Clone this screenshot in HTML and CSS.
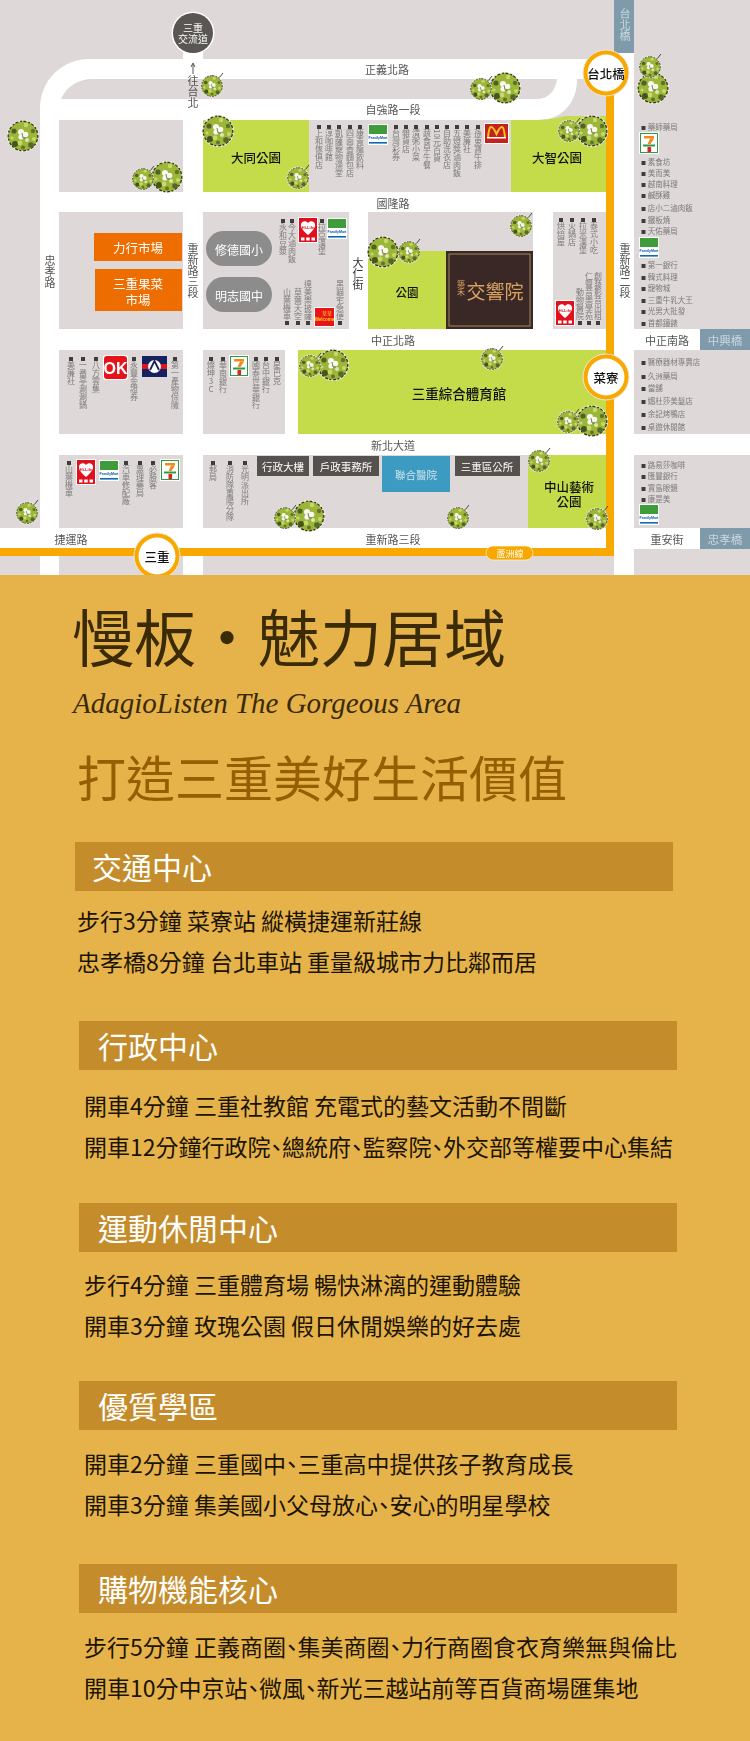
FILE: index.html
```html
<!DOCTYPE html>
<html lang="zh-Hant">
<head>
<meta charset="utf-8">
<title>慢板·魅力居域</title>
<link rel="stylesheet" href="styles.css">
</head>
<body>
<div class="page">
<svg class="map" viewBox="0 0 750 575" width="750" height="575" xmlns="http://www.w3.org/2000/svg">
  <defs>
    <g id="tree">
      <circle r="16" fill="#f4f2ee"/>
      <circle r="14.800" fill="#9cb63a"/>
      <circle r="14.800" fill="none" stroke="#2f3316" stroke-width="1.300" stroke-dasharray="2 1.300 3 2"/>
      <circle cx="-9" cy="-5" r="2.600" fill="#4f6126"/>
      <circle cx="8" cy="9" r="2.800" fill="#55672a"/>
      <circle cx="-8" cy="8" r="3" fill="#44531f"/>
      <circle cx="10" cy="-5" r="2.200" fill="#5f7429"/>
      <circle cx="0" cy="11.500" r="2" fill="#5f7429"/>
      <circle cx="-11" cy="2" r="1.600" fill="#c7d96a"/>
      <circle cx="3" cy="-11" r="2.200" fill="#c7d96a"/>
      <circle cx="11" cy="3" r="2" fill="#c7d96a"/>
      <circle cx="-3" cy="7" r="2.400" fill="#c7d96a"/>
      <circle cx="-2" cy="-4" r="3" fill="#f7f8ee"/>
      <circle cx="2.500" cy="-1.500" r="2.800" fill="#f7f8ee"/>
      <circle cx="-2" cy="1" r="2.600" fill="#f7f8ee"/>
      <circle cx="4" cy="4" r="2" fill="#dfe6b0"/>
      <path d="M-1 -3 L0 2 L3 2" stroke="#6c7458" stroke-width=".9" fill="none"/>
    </g>
    <g id="tree-s">
      <path d="M7 -8 L11 -13" stroke="#4a4a3a" stroke-width="1"/>
      <use href="#tree" transform="scale(.7)"/>
    </g>
    <g id="fm">
      <rect x="-1" y="-1" width="20" height="21" fill="#fff"/>
      <rect width="18" height="9" fill="#3f9c3a"/>
      <rect y="17" width="18" height="1.600" fill="#0a6bb4"/>
      <text class="fm-t" x="9" y="13.500">FamilyMart</text>
    </g>
    <g id="seven">
      <rect x="-1" y="-1" width="20" height="22" fill="#fff"/>
      <rect x=".5" y=".5" width="17" height="19" fill="#fff" stroke="#2f9a46"/>
      <path d="M4 3 H14 V5.500 H4 Z" fill="#f08a1c"/>
      <path d="M14 5.500 L10.500 11 H7.600 L10 5.500 Z" fill="#f08a1c"/>
      <rect x="7.500" y="14" width="3.600" height="5" fill="#e0231c"/>
      <rect x="3" y="11.500" width="12" height="2" fill="#2f9a46"/>
    </g>
    <g id="hilife">
      <rect x="-1" y="-1" width="20" height="26" fill="#fff"/>
      <rect width="18" height="24" fill="#e2101c"/>
      <path d="M9 17 C3 12 1.500 9 2 6 C2.600 3 7 2 9 5 C11 2 15.400 3 16 6 C16.500 9 15 12 9 17 Z" fill="#fff"/>
      <text class="hl-t" x="9" y="10.500">Hi-Life</text>
      <path d="M2 19.500 H5.500 V22.500 H2 Z M7.200 19.500 H10.700 V22.500 H7.200 Z M12.500 19.500 H16 V22.500 H12.500 Z" fill="#fff"/>
    </g>
  </defs>

  <g class="roads">
    <path d="M40 575 V108 A49 49 0 0 1 89 59 H614 V79 H577 C577 105 560 120 538 120 H59 V575 Z"/>
    <rect x="183" y="50" width="20" height="525"/>
    <rect x="59" y="192" width="555" height="20"/>
    <rect x="349" y="212" width="19" height="117"/>
    <rect x="533" y="212" width="20" height="117"/>
    <rect x="59" y="329" width="641" height="21"/>
    <rect x="285" y="350" width="13" height="84"/>
    <rect x="59" y="434" width="691" height="21"/>
    <rect x="0" y="528" width="700" height="21"/>
    <rect x="614" y="50" width="20" height="525"/>
  </g>
  <path class="block" d="M61 99 C66 87 78 79 92 79 H557 C556 90 548 99 538 99 Z"/>

  <rect class="bridge" x="614" y="0" width="20" height="53"/>
  <rect class="bridge" x="700" y="329" width="50" height="21"/>
  <rect class="bridge" x="700" y="528" width="50" height="21"/>

  <rect class="park" x="203" y="120" width="106" height="72"/>
  <path class="park" d="M511 120 H538 C550 120 560 117 566 116 H614 V192 H511 Z"/>
  <rect class="park" x="368" y="251" width="78" height="78"/>
  <rect class="park" x="298" y="350" width="316" height="84"/>
  <rect class="park" x="528" y="455" width="86" height="73"/>

  <rect class="hall" x="446" y="251" width="87" height="78"/>
  <rect class="hall-line" x="449" y="254" width="81" height="72"/>
  <text class="hall-t" x="495" y="290">交響院</text>
  <text class="hall-s" x="461" y="280">築禾</text>

  <rect class="market" x="94" y="233" width="88" height="28"/>
  <rect class="market" x="95" y="269" width="87" height="42"/>
  <text class="w13" x="138" y="247">力行市場</text>
  <text class="w13" x="138" y="283">三重果菜</text>
  <text class="w13" x="138" y="299">市場</text>

  <rect class="school" x="206" y="231" width="66" height="35" rx="17.500"/>
  <rect class="school" x="206" y="277" width="66" height="35" rx="17.500"/>
  <text class="w12" x="239" y="249">修德國小</text>
  <text class="w12" x="239" y="295">明志國中</text>

  <rect class="office" x="257" y="456" width="52" height="20"/>
  <rect class="office" x="313" y="456" width="66" height="20"/>
  <rect class="hospital" x="382" y="456" width="68" height="36"/>
  <rect class="office" x="455" y="456" width="65" height="20"/>
  <text class="w11" x="283" y="466">行政大樓</text>
  <text class="w11" x="346" y="466">戶政事務所</text>
  <text class="w11 dim" x="416" y="474">聯合醫院</text>
  <text class="w11" x="487" y="466">三重區公所</text>

  <g class="line">
    <rect x="606" y="95" width="8" height="461"/>
    <rect x="0" y="548" width="614" height="8"/>
  </g>
  <rect class="pill" x="486" y="546" width="47" height="14" rx="7"/>
  <text class="pill-t" x="510" y="553">蘆洲線</text>

  <text class="rd" x="387" y="69">正義北路</text>
  <text class="rd" x="393" y="109">自強路一段</text>
  <text class="rd" x="393" y="203">國隆路</text>
  <text class="rd" x="393" y="340">中正北路</text>
  <text class="rd" x="393" y="445">新北大道</text>
  <text class="rd" x="393" y="539">重新路三段</text>
  <text class="rd" x="71" y="539">捷運路</text>
  <text class="rd" x="667" y="340">中正南路</text>
  <text class="rd" x="667" y="539">重安街</text>
  <text class="br" x="725" y="340">中興橋</text>
  <text class="br" x="725" y="539">忠孝橋</text>

  <text class="rv" x="50" y="255">忠孝路</text>
  <text class="rv" x="193" y="243">重新路三段</text>
  <text class="rv" x="625" y="243">重新路二段</text>
  <text class="rv" x="193" y="75">往台北</text>
  <text class="rv dk" x="358" y="257">大仁街</text>
  <text class="rv light" x="625" y="8">台北橋</text>
  <path class="arrow" d="M193 74 V64 M191 67 L193 63 L195 67"/>

  <g class="shops">
    <text x="319" y="124"><tspan class="b">■</tspan>上和傢俱店</text>
    <text x="329" y="124"><tspan class="b">■</tspan>淳咖啡館</text>
    <text x="339" y="124"><tspan class="b">■</tspan>凱薩寵物澡堂</text>
    <text x="350" y="124"><tspan class="b">■</tspan>四面香麵包店</text>
    <text x="360" y="124"><tspan class="b">■</tspan>康青龍飲料</text>
    <text x="396" y="124"><tspan class="b">■</tspan>台灣彩券</text>
    <text x="406" y="124"><tspan class="b">■</tspan>雜貨店</text>
    <text x="416" y="124"><tspan class="b">■</tspan>清粥小菜</text>
    <text x="427" y="124"><tspan class="b">■</tspan>蔬食早午餐</text>
    <text x="437" y="124"><tspan class="b">■</tspan>10元百貨</text>
    <text x="447" y="124"><tspan class="b">■</tspan>自助洗衣店</text>
    <text x="457" y="124"><tspan class="b">■</tspan>五燈獎滷肉飯</text>
    <text x="467" y="124"><tspan class="b">■</tspan>美廉社</text>
    <text x="478" y="124"><tspan class="b">■</tspan>孫東寶牛排</text>

    <text x="283" y="218"><tspan class="b">■</tspan>永和豆漿</text>
    <text x="292" y="218"><tspan class="b">■</tspan>今大滷肉飯</text>
    <text x="322" y="218"><tspan class="b">■</tspan>拉亞漢堡</text>

    <text class="end" x="287" y="325">山葉機車<tspan class="b">■</tspan></text>
    <text class="end" x="298" y="325">草葉天空<tspan class="b">■</tspan></text>
    <text class="end" x="308" y="325">達美樂披薩<tspan class="b">■</tspan></text>
    <text class="end" x="340" y="325">黑貓宅急便<tspan class="b">■</tspan></text>

    <text x="561" y="217"><tspan class="b">■</tspan>烘焙屋</text>
    <text x="572" y="217"><tspan class="b">■</tspan>火鍋店</text>
    <text x="583" y="217"><tspan class="b">■</tspan>拉米漢堡</text>
    <text x="594" y="217"><tspan class="b">■</tspan>泰式小吃</text>
    <text class="end" x="580" y="325">動物醫院<tspan class="b">■</tspan></text>
    <text class="end" x="589" y="325">仁聲音樂學苑<tspan class="b">■</tspan></text>
    <text class="end" x="598" y="325">創藝影音出租<tspan class="b">■</tspan></text>

    <text x="71" y="356"><tspan class="b">■</tspan>美廉社</text>
    <text x="83" y="356"><tspan class="b">■</tspan>一番亭涮涮鍋</text>
    <text x="96" y="356"><tspan class="b">■</tspan>八方雲集</text>
    <text x="134" y="356"><tspan class="b">■</tspan>永豐金證券</text>
    <text x="175" y="356"><tspan class="b">■</tspan>第一產物保險</text>

    <text class="up" x="211" y="356"><tspan class="b">■</tspan>燦坤3C</text>
    <text x="223" y="356"><tspan class="b">■</tspan>華南銀行</text>
    <text x="256" y="356"><tspan class="b">■</tspan>國泰世華銀行</text>
    <text x="266" y="356"><tspan class="b">■</tspan>台中銀行</text>
    <text x="277" y="356"><tspan class="b">■</tspan>星巴克</text>

    <text x="69" y="460"><tspan class="b">■</tspan>山葉機車</text>
    <text x="126" y="460"><tspan class="b">■</tspan>汽車修配廠</text>
    <text x="140" y="460"><tspan class="b">■</tspan>惠理藥局</text>
    <text x="153" y="460"><tspan class="b">■</tspan>必勝客</text>
    <text x="213" y="460"><tspan class="b">■</tspan>郵局</text>
    <text x="230" y="460"><tspan class="b">■</tspan>消防隊重陽分隊</text>
    <text x="245" y="460"><tspan class="b">■</tspan>光明派出所</text>
  </g>

  <g class="list">
    <text x="641" y="126"><tspan class="b">■</tspan> 藥師藥局</text>
    <text x="641" y="161"><tspan class="b">■</tspan> 素食坊</text>
    <text x="641" y="172"><tspan class="b">■</tspan> 美而美</text>
    <text x="641" y="183"><tspan class="b">■</tspan> 越南料理</text>
    <text x="641" y="194"><tspan class="b">■</tspan> 鹹酥雞</text>
    <text x="641" y="207"><tspan class="b">■</tspan> 店小二滷肉飯</text>
    <text x="641" y="219"><tspan class="b">■</tspan> 鐵板燒</text>
    <text x="641" y="230"><tspan class="b">■</tspan> 天佑藥局</text>
    <text x="641" y="264"><tspan class="b">■</tspan> 第一銀行</text>
    <text x="641" y="276"><tspan class="b">■</tspan> 韓式料理</text>
    <text x="641" y="287"><tspan class="b">■</tspan> 寵物城</text>
    <text x="641" y="299"><tspan class="b">■</tspan> 三重牛乳大王</text>
    <text x="641" y="310"><tspan class="b">■</tspan> 光男大批發</text>
    <text x="641" y="322"><tspan class="b">■</tspan> 首都鐘錶</text>
    <text x="641" y="361"><tspan class="b">■</tspan> 醫療器材專賣店</text>
    <text x="641" y="375"><tspan class="b">■</tspan> 久洲藥局</text>
    <text x="641" y="387"><tspan class="b">■</tspan> 當舖</text>
    <text x="641" y="400"><tspan class="b">■</tspan> 媚杜莎美髮店</text>
    <text x="641" y="413"><tspan class="b">■</tspan> 余記烤鴨店</text>
    <text x="641" y="426"><tspan class="b">■</tspan> 桌遊休閒館</text>
    <text x="641" y="464"><tspan class="b">■</tspan> 路易莎咖啡</text>
    <text x="641" y="475"><tspan class="b">■</tspan> 匯豐銀行</text>
    <text x="641" y="487"><tspan class="b">■</tspan> 寶島眼鏡</text>
    <text x="641" y="498"><tspan class="b">■</tspan> 康是美</text>
  </g>

  <use href="#fm" x="369" y="125"/>
  <use href="#fm" x="328" y="219"/>
  <use href="#fm" x="640" y="238"/>
  <use href="#fm" x="640" y="505"/>
  <use href="#fm" x="100" y="461"/>
  <use href="#seven" x="640" y="133"/>
  <use href="#seven" x="230" y="356"/>
  <use href="#seven" x="161" y="460"/>
  <use href="#hilife" x="299" y="218"/>
  <use href="#hilife" x="556" y="301"/>
  <use href="#hilife" x="77" y="460"/>

  <g>
    <rect x="484" y="123" width="25" height="21" fill="#fff"/>
    <rect x="485" y="124" width="23" height="19" fill="#c4211c"/>
    <path class="mcd" d="M488 138 C489 124 492 124 496.500 134 C501 124 504 124 505 138"/>
    <rect x="487" y="137" width="19" height="1.500" fill="#fff"/>
  </g>
  <g>
    <rect x="314" y="307" width="21" height="20" fill="#fff"/>
    <rect x="315" y="308" width="19" height="18" fill="#e8141a"/>
    <text class="wel" x="324.500" y="321">Welcome</text>
    <text class="wel2" x="327" y="314.500">草草</text>
  </g>
  <g>
    <rect x="103" y="355" width="25" height="25" rx="3" fill="#fff"/>
    <rect x="104" y="356" width="23" height="23" rx="3" fill="#e5141b"/>
    <text class="ok" x="115.500" y="368.500">OK</text>
  </g>
  <g>
    <rect x="142" y="356" width="25" height="21" fill="#15225f"/>
    <rect x="142" y="364" width="25" height="5" fill="#e0141b"/>
    <circle cx="154.500" cy="366.500" r="6.500" fill="#fff"/>
    <path d="M150 370 L154.500 361 L159 370" fill="none" stroke="#15225f" stroke-width="1.800"/>
  </g>

  <use href="#tree" transform="translate(23 136)"/>
  <use href="#tree" transform="translate(167 177)"/>
  <use href="#tree" transform="translate(218 131)"/>
  <use href="#tree" transform="translate(505 88)"/>
  <use href="#tree" transform="translate(653 88)"/>
  <use href="#tree" transform="translate(592 131)"/>
  <use href="#tree" transform="translate(383 252)"/>
  <use href="#tree" transform="translate(309 516)"/>
  <use href="#tree" transform="translate(333 365)"/>
  <use href="#tree" transform="translate(592 421)"/>
  <use href="#tree-s" transform="translate(212 86)"/>
  <use href="#tree-s" transform="translate(143 179)"/>
  <use href="#tree-s" transform="translate(298 178)"/>
  <use href="#tree-s" transform="translate(481 89)"/>
  <use href="#tree-s" transform="translate(650 67)"/>
  <use href="#tree-s" transform="translate(569 131)"/>
  <use href="#tree-s" transform="translate(521 226)"/>
  <use href="#tree-s" transform="translate(409 252)"/>
  <use href="#tree-s" transform="translate(27 513)"/>
  <use href="#tree-s" transform="translate(285 518)"/>
  <use href="#tree-s" transform="translate(310 366)"/>
  <use href="#tree-s" transform="translate(492 359)"/>
  <use href="#tree-s" transform="translate(568 422)"/>
  <use href="#tree-s" transform="translate(539 461)"/>
  <use href="#tree-s" transform="translate(458 518)"/>
  <use href="#tree-s" transform="translate(597 519)"/>

  <text class="pk" x="256" y="157">大同公園</text>
  <text class="pk" x="557" y="157">大智公園</text>
  <text class="pk small" x="407" y="292">公園</text>
  <text class="pk big" x="459" y="393">三重綜合體育館</text>
  <text class="pk" x="569" y="486">中山藝術</text>
  <text class="pk" x="569" y="501">公園</text>

  <circle class="ic" cx="193" cy="33" r="21.500"/>
  <circle class="ic-in" cx="193" cy="33" r="20"/>
  <text class="w10" x="193" y="27">三重</text>
  <text class="w10" x="193" y="38.500">交流道</text>

  <circle class="st-o" cx="606" cy="73" r="23"/>
  <circle class="st" cx="606" cy="73" r="18.500"/>
  <text class="st-t" x="606" y="73.500">台北橋</text>
  <circle class="st-o" cx="606" cy="377" r="23"/>
  <circle class="st" cx="606" cy="377" r="18.500"/>
  <text class="st-t" x="606" y="377.500">菜寮</text>
  <circle class="st-o" cx="157" cy="556" r="23"/>
  <circle class="st" cx="157" cy="556" r="18.500"/>
  <text class="st-t" x="157" y="556.500">三重</text>
</svg>

<main class="panel">
  <h1 class="title">慢板·魅力居域</h1>
  <p class="script">AdagioListen The Gorgeous Area</p>
  <h2 class="slogan">打造三重美好生活價值</h2>

  <section class="sec sec-first">
    <h3 class="bar">交通中心</h3>
    <ul class="lines">
      <li>步行3分鐘 菜寮站 縱橫捷運新莊線</li>
      <li>忠孝橋8分鐘 台北車站 重量級城市力比鄰而居</li>
    </ul>
  </section>
  <section class="sec sec-2">
    <h3 class="bar">行政中心</h3>
    <ul class="lines">
      <li>開車4分鐘 三重社教館 充電式的藝文活動不間斷</li>
      <li>開車12分鐘行政院、總統府、監察院、外交部等權要中心集結</li>
    </ul>
  </section>
  <section class="sec sec-3">
    <h3 class="bar">運動休閒中心</h3>
    <ul class="lines">
      <li>步行4分鐘 三重體育場 暢快淋漓的運動體驗</li>
      <li>開車3分鐘 玫瑰公園 假日休閒娛樂的好去處</li>
    </ul>
  </section>
  <section class="sec sec-4">
    <h3 class="bar">優質學區</h3>
    <ul class="lines">
      <li>開車2分鐘 三重國中、三重高中提供孩子教育成長</li>
      <li>開車3分鐘 集美國小父母放心、安心的明星學校</li>
    </ul>
  </section>
  <section class="sec sec-5">
    <h3 class="bar">購物機能核心</h3>
    <ul class="lines">
      <li>步行5分鐘 正義商圈、集美商圈、力行商圈食衣育樂無與倫比</li>
      <li>開車10分中京站、微風、新光三越站前等百貨商場匯集地</li>
    </ul>
  </section>
</main>
</div>
</body>
</html>
```
FILE: styles.css
```css
* { box-sizing: border-box; }
html, body { margin: 0; padding: 0; }
body { width: 750px; background: #e6b34a; font-family: "Noto Sans CJK TC", "Noto Sans", sans-serif; }
.page { width: 750px; height: 1741px; overflow: hidden; }

/* map */
.map { display: block; background: #dfd8d8; font-family: "Noto Sans CJK TC", "Noto Sans", sans-serif; filter: blur(.25px); }
.roads { fill: #fff; }
.block { fill: #dfd8d8; }
.bridge { fill: #7f9bab; }
.park { fill: #c5dc4a; }
.hall { fill: #3a2826; }
.hall-line { fill: none; stroke: #a08a5a; stroke-width: 1; }
.hall-t { fill: #d9a35f; font-size: 19px; text-anchor: middle; dominant-baseline: central; }
.hall-s { fill: #d9a35f; font-size: 8px; writing-mode: vertical-rl; }
.market { fill: #ee6d00; }
.school { fill: #8c8c8c; }
.office { fill: #55524d; }
.hospital { fill: #3d9bc1; }
.line { fill: #f9a800; }
.pill { fill: #f9a800; stroke: #fff; stroke-width: .6; }
.pill-t { fill: #fff; font-size: 9px; text-anchor: middle; dominant-baseline: central; }

.w13, .w12, .w11, .w10, .rd, .br, .pk, .st-t { text-anchor: middle; dominant-baseline: central; }
.w13 { fill: #fff; font-size: 12.5px; }
.w12 { fill: #fff; font-size: 12px; }
.w11 { fill: #fff; font-size: 10.5px; }
.w10 { fill: #fff; font-size: 10px; }
.dim { fill: #cfe3ec; }
.rd { fill: #555; font-size: 11px; }
.br { fill: #c9d7df; font-size: 11.5px; }
.rv { fill: #555; font-size: 11px; writing-mode: vertical-rl; }
.dk { fill: #333; }
.light { fill: #c9d7df; }
.arrow { fill: none; stroke: #555; stroke-width: 1; }

.shops { fill: #7a7a7a; font-size: 8px; writing-mode: vertical-rl; }
.shops .end { text-anchor: end; }
.shops .up { text-orientation: upright; }
.b { fill: #3d3d3d; font-size: 5px; }
.list { fill: #7a7a7a; font-size: 7.5px; dominant-baseline: central; }

.fm-t { fill: #0a5aa8; font-family: "Liberation Sans", sans-serif; font-size: 3.6px; font-weight: 700; text-anchor: middle; }
.hl-t { fill: #e2101c; font-family: "Liberation Sans", sans-serif; font-size: 4px; font-weight: 700; text-anchor: middle; }
.mcd { fill: none; stroke: #f7c51b; stroke-width: 2; }
.wel { fill: #f7d51b; font-family: "Liberation Sans", sans-serif; font-size: 4.5px; font-weight: 700; text-anchor: middle; }
.wel2 { fill: #f7d51b; font-size: 5px; text-anchor: middle; }
.ok { fill: #fff; font-family: "Liberation Sans", sans-serif; font-size: 16px; font-weight: 700; text-anchor: middle; dominant-baseline: central; }

.pk { fill: #111; font-size: 12.5px; font-weight: 500; }
.small { font-size: 11.5px; }
.big { font-size: 13.5px; }
.ic { fill: #fff; }
.ic-in { fill: #595653; }
.st-o { fill: #f9a800; stroke: #ebe6e0; stroke-width: 1; }
.st { fill: #fff; }
.st-t { fill: #111; font-size: 12.5px; font-weight: 500; }

/* text panel */
.panel { display: flow-root; height: 1166px; background: #e6b34a; }
.title { margin: 24px 0 0 72px; font-size: 62px; line-height: 72px; font-weight: 400; color: #3a2a05; white-space: nowrap; }
.script { margin: 14px 0 0 73px; font-family: "Liberation Serif", serif; font-style: italic; font-size: 29px; line-height: 36px; color: #3a2a05; white-space: nowrap; }
.slogan { margin: 25px 0 0 77px; font-size: 49px; line-height: 60px; font-weight: 400; color: #955e00; white-space: nowrap; }

.sec { margin-left: 79px; width: 598px; }
.sec-first { margin-left: 75px; margin-top: 36px; }
.sec-2 { margin-top: 39px; }
.sec-3 { margin-top: 36px; }
.sec-4 { margin-top: 35px; }
.sec-5 { margin-top: 39px; }
.bar { margin: 0; height: 49px; padding-left: 19px; background: #c48c2b; color: #fff; font-size: 30px; line-height: 49px; font-weight: 400; }
.sec-first .bar { padding-left: 17px; }
.lines { list-style: none; margin: 13px 0 0; padding: 0 0 0 5px; }
.sec-first .lines { margin-top: 9px; padding-left: 2px; }
.sec-2 .lines { margin-top: 15px; }
.sec-3 .lines { margin-top: 12px; }
.lines li { font-size: 23px; line-height: 41px; color: #1c1402; white-space: nowrap; font-feature-settings: "halt"; }
```
